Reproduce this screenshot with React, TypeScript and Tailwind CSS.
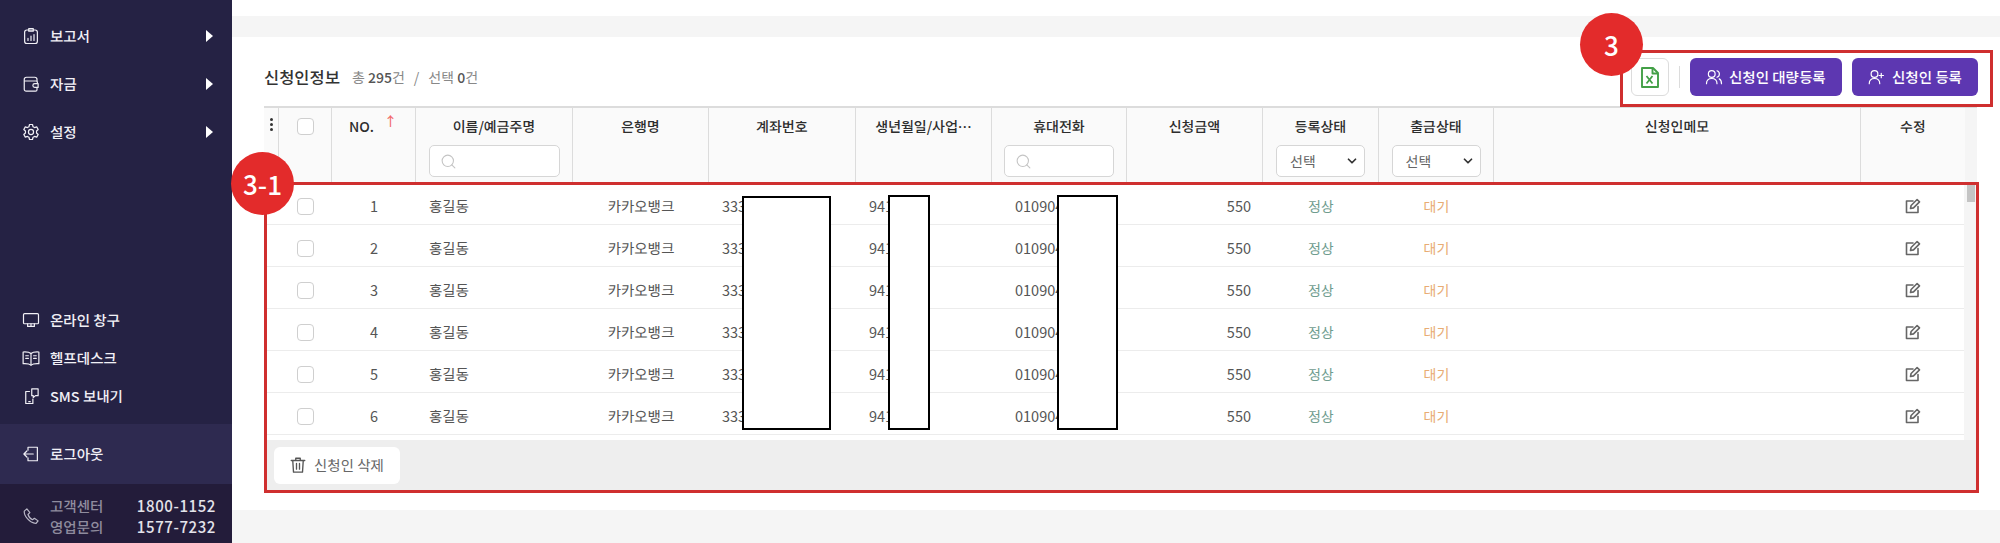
import { ChevronDown, Search } from "lucide-react";

const FONT = "font-['Noto_Sans_KR','Noto_Sans_CJK_KR',sans-serif]";
const COLS =
  "grid grid-cols-[15px_53px_84px_157px_136px_147px_136px_135px_136px_116px_115px_367px_104px]";

const rows = [1, 2, 3, 4, 5, 6];

function IconBase({ className, children }: { className?: string; children: React.ReactNode }) {
  return (
    <svg
      viewBox="0 0 24 24"
      fill="none"
      stroke="currentColor"
      strokeWidth="1.6"
      strokeLinecap="round"
      strokeLinejoin="round"
      className={className}
    >
      {children}
    </svg>
  );
}

const icons: Record<string, React.ReactNode> = {
  report: (
    <>
      <rect x="3.5" y="4" width="17" height="18" rx="3" />
      <path d="M9 2h6v3.500H9z" />
      <path d="M8 18v-3M12 18v-6M16 18v-8" />
    </>
  ),
  wallet: (
    <>
      <path d="M20 8V6a3 3 0 0 0-3-3H6a3 3 0 0 0-3 3v13a2.500 2.500 0 0 0 2.500 2.500H18a2 2 0 0 0 2-2v-2.500" />
      <path d="M3.500 8H19a1.500 1.500 0 0 1 1.500 1.500V11" />
      <path d="M21.500 11.500H17a2.500 2.500 0 0 0 0 5h4.500z" />
    </>
  ),
  gear: (
    <>
      <circle cx="12" cy="12" r="3.400" />
      <path d="M10 2h4l.7 3 2 1.100 2.900-.9 2 3.500-2.200 2v2.600l2.200 2-2 3.500-2.900-.9-2 1.100-.7 3h-4l-.7-3-2-1.100-2.900.9-2-3.500 2.200-2v-2.600l-2.200-2 2-3.500 2.900.9 2-1.100z" />
    </>
  ),
  monitor: (
    <>
      <rect x="2" y="3.500" width="20" height="13.500" rx="1.500" />
      <path d="M7.500 17v3.500h9V17M12 17v3.500" />
    </>
  ),
  book: (
    <>
      <path d="M12 6C10 4.300 6 3.700 1.500 4v15.500c4.500-.3 8.500.3 10.500 2 2-1.700 6-2.300 10.500-2V4C18 3.700 14 4.300 12 6z" />
      <path d="M12 6v15.500M5 9h3.500M5 12.500h3.500M15.500 9H19M15.500 12.500H19" />
    </>
  ),
  sms: (
    <>
      <path d="M13 2.500h8.500v9h-3.500L15 14v-2.500h-2z" />
      <path d="M10 6H5v16h9.500v-6" />
      <path d="M9 19.500h2" />
    </>
  ),
  logout: (
    <>
      <path d="M8 7V3h12.500v18H8v-4" />
      <path d="M15 12H2.500M6.500 8 2.500 12l4 4" />
    </>
  ),
  phone: (
    <path d="M6.500 2.500 3 5.500c-.5 6 6.500 15.500 15.500 16.500l3-3.500-5-3.500-2.500 2c-2.500-1-5-4-6-7l2.500-2.500z" />
  ),
};

function SideItem({ icon, label, arrow, className }: { icon: string; label: string; arrow?: boolean; className?: string }) {
  return (
    <div className={`flex items-center pl-[22px] pr-[19px] text-[#f1f0f6] ${className ?? ""}`}>
      <IconBase className="h-[18px] w-[18px] shrink-0">{icons[icon]}</IconBase>
      <span className="ml-[10px] flex-1 text-[14.5px] font-medium">{label}</span>
      {arrow && <span className="h-0 w-0 border-y-[6px] border-l-[7px] border-y-transparent border-l-white" />}
    </div>
  );
}

function Sidebar() {
  return (
    <aside className="flex h-[543px] w-[232px] shrink-0 flex-col bg-[#252244]">
      <div className="flex flex-col pt-[12px]">
        <SideItem icon="report" label="보고서" arrow className="h-[48px]" />
        <SideItem icon="wallet" label="자금" arrow className="h-[48px]" />
        <SideItem icon="gear" label="설정" arrow className="h-[48px]" />
      </div>
      <div className="mt-auto flex flex-col pb-[9px]">
        <SideItem icon="monitor" label="온라인 창구" className="h-[38px]" />
        <SideItem icon="book" label="헬프데스크" className="h-[38px]" />
        <SideItem icon="sms" label="SMS 보내기" className="h-[38px]" />
      </div>
      <SideItem icon="logout" label="로그아웃" className="h-[60px] bg-[#2e2a50]" />
      <div className="flex h-[59px] items-center bg-[#231c3a] pl-[22px] pr-[16px] pt-[4px] text-[14.5px] leading-[21px]">
        <IconBase className="h-[18px] w-[18px] shrink-0 text-[#b9b7c6]">{icons.phone}</IconBase>
        <div className="ml-[10px] flex flex-col font-medium text-[#8f8c9e]">
          <span>고객센터</span>
          <span>영업문의</span>
        </div>
        <div className="ml-auto flex flex-col text-[15px] font-medium tracking-[0.6px] text-[#e4e3ea]">
          <span>1800-1152</span>
          <span>1577-7232</span>
        </div>
      </div>
    </aside>
  );
}

function HeadCell({ label, children, className }: { label: React.ReactNode; children?: React.ReactNode; className?: string }) {
  return (
    <div className={`flex flex-col items-center border-r border-[#dcdcdc] pt-[7px] ${className ?? ""}`}>
      <span className="text-[14px] font-medium leading-[22px] text-[#2d2d2d]">{label}</span>
      {children}
    </div>
  );
}

function SearchBox({ width }: { width: string }) {
  return (
    <div className={`mt-[8px] flex h-[32px] items-center rounded-[5px] border border-[#d6d6d6] bg-white pl-[10px] ${width}`}>
      <Search className="h-[17px] w-[17px] text-[#c4c4c4]" strokeWidth={1.5} />
    </div>
  );
}

function SelectBox() {
  return (
    <div className="mt-[8px] flex h-[32px] w-[89px] items-center justify-between rounded-[5px] border border-[#d6d6d6] bg-white pl-[13px] pr-[5px] text-[14px] text-[#666]">
      <span>선택</span>
      <ChevronDown className="h-[14px] w-[14px] text-[#333]" strokeWidth={3} />
    </div>
  );
}

function TableHead() {
  return (
    <div className="flex h-[77px] w-[1713px] border-t-2 border-[#dcdcdc] bg-[#fafafa]">
      <div className={COLS}>
        <div className="flex flex-col items-center gap-[2px] border-r border-[#dcdcdc] pt-[10px]">
          <i className="h-[3px] w-[3px] rounded-full bg-[#333]" />
          <i className="h-[3px] w-[3px] rounded-full bg-[#333]" />
          <i className="h-[3px] w-[3px] rounded-full bg-[#333]" />
        </div>
        <div className="flex justify-center border-r border-[#dcdcdc] pt-[10px]">
          <span className="h-[17px] w-[17px] rounded-[4px] border border-[#cfcfcf] bg-white" />
        </div>
        <HeadCell
          label={
            <span className="relative left-[-12px]">
              NO.
              <span className="absolute left-[35px] top-[-6px] text-[13px] text-[#f26a6a]">↑</span>
            </span>
          }
        />
        <HeadCell label="이름/예금주명"><SearchBox width="w-[131px]" /></HeadCell>
        <HeadCell label="은행명" />
        <HeadCell label="계좌번호" />
        <HeadCell label="생년월일/사업…" />
        <HeadCell label="휴대전화"><SearchBox width="w-[110px]" /></HeadCell>
        <HeadCell label="신청금액" />
        <HeadCell label="등록상태"><SelectBox /></HeadCell>
        <HeadCell label="출금상태"><SelectBox /></HeadCell>
        <HeadCell label="신청인메모" />
        <HeadCell label="수정" className="border-r-0" />
      </div>
      <div className="flex-1 bg-[#f5f5f5]" />
    </div>
  );
}

function EditIcon() {
  return (
    <svg viewBox="0 0 16 16" fill="none" stroke="#666" strokeWidth="1.600" strokeLinejoin="round" strokeLinecap="round" className="h-[16px] w-[16px]">
      <path d="M8 3H1.500v11.500H13V8.500" />
      <path d="M5.500 10.500l.6-3 6-6 2.400 2.400-6 6z" />
    </svg>
  );
}

function Row({ no }: { no: number }) {
  return (
    <div className={`${COLS} h-[42px] w-[1700px] items-center border-b border-[#ececec] pt-[5px] text-[14.5px] text-[#555] [&>*]:min-w-0`}>
      <span />
      <div className="flex justify-center">
        <span className="mt-[1px] h-[17px] w-[17px] rounded-[4px] border border-[#cfcfcf] bg-white" />
      </div>
      <span className="text-center">{no}</span>
      <span className="pl-[13px]">홍길동</span>
      <span className="text-center">카카오뱅크</span>
      <span className="pl-[13px]">3334</span>
      <span className="pl-[13px]">941</span>
      <span className="pl-[23px]">010904</span>
      <span className="pr-[12px] text-right">550</span>
      <span className="text-center text-[14px] text-[#6f9c8f]">정상</span>
      <span className="text-center text-[14px] text-[#e8ac74]">대기</span>
      <span />
      <span className="flex justify-center"><EditIcon /></span>
    </div>
  );
}

function TableBody() {
  return (
    <div className="relative flex h-[257px] w-[1713px] overflow-hidden">
      <div className="flex-1">
        {rows.map((n) => (
          <Row key={n} no={n} />
        ))}
      </div>
      <div className="absolute bottom-0 right-0 top-0 w-[13px] bg-[#f5f5f5]">
        <div className="mx-auto mt-[2px] h-[17px] w-[8px] bg-[#c4c4c4]" />
      </div>
    </div>
  );
}

function Toolbar() {
  return (
    <div className="flex h-[69px] items-center justify-between pl-[32px] pr-[22px] pt-[11px]">
      <div className="flex items-center text-[14px] text-[#888]">
        <span className="mr-[12px] text-[16.5px] font-medium text-[#333]">신청인정보</span>
        <span>총 <span className="font-medium text-[#555]">295</span>건</span>
        <span className="mx-[9px]">/</span>
        <span>선택 <span className="font-medium text-[#555]">0</span>건</span>
      </div>
      <div className="flex items-center">
        <div className="flex h-[38px] w-[38px] items-center justify-center rounded-[6px] border border-[#dcdcdc]">
          <svg viewBox="0 0 18 21" fill="none" stroke="#43a047" strokeWidth="1.900" strokeLinejoin="round" className="h-[21px] w-[18px]">
            <path d="M1 1h11l5 5v14H1z" />
            <path d="M11.500 1v5.500H17" />
            <path d="M5.500 9l6 7.500M11.500 9l-6 7.500" strokeWidth="1.800" />
          </svg>
        </div>
        <span className="mx-[10px] h-[22px] w-px bg-[#dcdcdc]" />
        <button className="flex h-[38px] w-[152px] items-center gap-[6px] rounded-[6px] bg-[#5d37b1] pl-[15px] text-[14.5px] font-medium text-white">
          <IconBase className="h-[18px] w-[18px] shrink-0">
            <circle cx="9" cy="8" r="4.500" />
            <path d="M2 21c0-4.500 3-7 7-7s7 2.500 7 7M16 3.700a4.500 4.500 0 0 1 0 8.600M19 14.500c2 1 3 3.500 3 6.500" />
          </IconBase>
          신청인 대량등록
        </button>
        <button className="ml-[10px] flex h-[38px] w-[126px] items-center gap-[7px] rounded-[6px] bg-[#5d37b1] pl-[15px] text-[14.5px] font-medium text-white">
          <IconBase className="h-[18px] w-[18px] shrink-0">
            <circle cx="10" cy="8" r="4.500" />
            <path d="M3 21c0-4.500 3-7 7-7s7 2.500 7 7M19 7v6M16 10h6" />
          </IconBase>
          신청인 등록
        </button>
      </div>
    </div>
  );
}

function TableFoot() {
  return (
    <div className="flex h-[50px] w-[1713px] items-center bg-[#eeeeee] pl-[10px]">
      <button className="flex h-[37px] w-[126px] items-center gap-[7px] rounded-[6px] bg-white pl-[15px] text-[14.5px] text-[#666]">
        <svg viewBox="0 0 24 24" fill="none" stroke="#555" strokeWidth="1.800" strokeLinecap="round" strokeLinejoin="round" className="h-[18px] w-[18px] shrink-0">
          <path d="M3 6h18M9 6V3h6v3M5 6l1 15.500h12L19 6M10 10v7.500M14 10v7.500" />
        </svg>
        신청인 삭제
      </button>
    </div>
  );
}

function Overlays() {
  return (
    <>
      {/* callout rectangles */}
      <div className="absolute left-[32px] top-[182px] h-[311px] w-[1715px] border-[3px] border-[#cf2f2f]" />
      <div className="absolute left-[1388px] top-[50px] h-[57px] w-[373px] border-[3px] border-[#cf2f2f]" />
      {/* callout badges */}
      <div className="absolute left-[-1px] top-[152px] flex h-[63px] w-[63px] items-center justify-center rounded-full bg-[#e32b2b] text-[26px] font-medium text-white">
        3-1
      </div>
      <div className="absolute left-[1348px] top-[13px] flex h-[63px] w-[63px] items-center justify-center rounded-full bg-[#e32b2b] text-[26px] font-medium text-white">
        3
      </div>
      {/* masked personal data */}
      <div className="absolute left-[510px] top-[196px] h-[234px] w-[89px] border-2 border-black bg-white" />
      <div className="absolute left-[656px] top-[195px] h-[235px] w-[42px] border-2 border-black bg-white" />
      <div className="absolute left-[825px] top-[195px] h-[235px] w-[61px] border-2 border-black bg-white" />
    </>
  );
}

export default function App() {
  return (
    <div className={`flex h-[543px] w-[2000px] overflow-hidden bg-white ${FONT}`}>
      <Sidebar />
      <main className="relative flex-1 bg-white">
        <div className="mt-[16px] h-[21px] bg-[#f5f5f5]" />
        <Toolbar />
        <div className="ml-[32px]">
          <TableHead />
          <TableBody />
          <TableFoot />
        </div>
        <div className="absolute bottom-0 left-0 right-0 h-[33px] bg-[#f5f5f5]" />
        <Overlays />
      </main>
    </div>
  );
}
